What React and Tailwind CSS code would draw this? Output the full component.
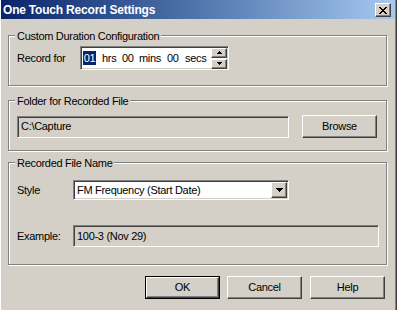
const sunken =
  "border border-t-[#808080] border-l-[#808080] border-b-white border-r-white shadow-[inset_1px_1px_0_#404040,inset_-1px_-1px_0_#d4d0c8]";
const raised =
  "border border-t-white border-l-white border-b-[#404040] border-r-[#404040] shadow-[inset_-1px_-1px_0_#808080]";

function Group({ label, className, children }) {
  return (
    <div
      className={`relative w-[379px] border border-[#808080] shadow-[inset_1px_1px_0_#fff,1px_1px_0_#fff] ${className}`}
    >
      <div className="absolute left-[6px] top-[-7px] px-[2px] bg-[#d4d0c8] leading-[14px]">
        {label}
      </div>
      {children}
    </div>
  );
}

function Button({ children, isDefault }) {
  if (isDefault) {
    return (
      <div className="w-[75px] h-[23px] border border-black">
        <button className={`w-full h-full ${raised} flex items-center justify-center`}>
          {children}
        </button>
      </div>
    );
  }
  return (
    <button className={`w-[75px] h-[23px] ${raised} flex items-center justify-center`}>
      {children}
    </button>
  );
}

// small arrows for spin and combo buttons
function Tri({ down, small }) {
  if (small) {
    return (
      <svg width="5" height="3" viewBox="0 0 5 3" shapeRendering="crispEdges">
        {down ? (
          <path d="M0 0h5v1h-1v1h-1v1h-1v-1h-1v-1h-1z" fill="#000" />
        ) : (
          <path d="M2 0h1v1h1v1h1v1h-5v-1h1v-1h1z" fill="#000" />
        )}
      </svg>
    );
  }
  return (
    <svg width="7" height="4" viewBox="0 0 7 4" shapeRendering="crispEdges">
      <path d="M0 0h7v1h-1v1h-1v1h-1v1h-1v-1h-1v-1h-1v-1h-1z" fill="#000" />
    </svg>
  );
}

export default function App() {
  return (
    <div className="w-[397px] h-[310px] bg-[#d4d0c8] border-l border-l-white border-r border-r-[#404040] shadow-[inset_-1px_0_0_#808080] font-['Liberation_Sans',Arial,sans-serif] text-[11px] tracking-[-0.3px] text-black select-none">
      {/* title bar */}
      <div className="h-[19px] mr-[1px] flex items-center justify-between bg-linear-to-r from-[#0a246a] to-[#a6caf0]">
        <span className="pl-[2px] text-white font-bold text-[12px] tracking-[-0.2px]">
          One Touch Record Settings
        </span>
        <button
          className={`mr-[4px] mt-[1px] w-[16px] h-[14px] bg-[#d4d0c8] ${raised} flex items-center justify-center`}
        >
          <svg width="8" height="7" viewBox="0 0 8 7" shapeRendering="crispEdges">
            <path
              d="M0 0h2v1h1v1h2v-1h1v-1h2v1h-1v1h-1v1h-1v1h1v1h1v1h1v1h-2v-1h-1v-1h-2v1h-1v1h-2v-1h1v-1h1v-1h1v-1h-1v-1h-1v-1h-1z"
              fill="#000"
            />
          </svg>
        </button>
      </div>

      <div className="pl-[7px] pt-[16px]">
        <Group label="Custom Duration Configuration" className="h-[51px]">
          <div className="flex items-center pl-[8px] pt-[10px]">
            <span className="w-[63px]">Record for</span>
            <div className={`w-[149px] h-[24px] bg-white ${sunken} flex items-center pl-[2px]`}>
              <span className="w-[13px] text-center bg-[#0a246a] text-white leading-[14px]">01</span>
              <span className="ml-[6px] w-[12px]">hrs</span>
              <span className="ml-[8px] w-[12px]">00</span>
              <span className="ml-[5px] w-[21px]">mins</span>
              <span className="ml-[7px] w-[12px]">00</span>
              <span className="ml-[6px] w-[22px]">secs</span>
              <div className="ml-auto mr-[1px] flex flex-col gap-[1px]">
                <div className={`w-[16px] h-[10px] bg-[#d4d0c8] ${raised} flex items-center justify-center`}>
                  <Tri small />
                </div>
                <div className={`w-[16px] h-[10px] bg-[#d4d0c8] ${raised} flex items-center justify-center`}>
                  <Tri small down />
                </div>
              </div>
            </div>
          </div>
        </Group>

        <Group label="Folder for Recorded File" className="mt-[14px] h-[51px]">
          <div className="flex items-center pl-[8px] pt-[14px]">
            <div className={`w-[272px] h-[22px] ${sunken} flex items-center pl-[3px]`}>
              C:\Capture
            </div>
            <div className="ml-[13px]">
              <Button>Browse</Button>
            </div>
          </div>
        </Group>

        <Group label="Recorded File Name" className="mt-[11px] h-[103px]">
          <div className="pl-[8px] pt-[17px]">
            <div className="flex items-center">
              <span className="w-[56px]">Style</span>
              <div className={`w-[216px] h-[20px] bg-white ${sunken} flex items-center pl-[3px]`}>
                FM Frequency (Start Date)
                <div
                  className={`ml-auto mr-[1px] w-[16px] h-[16px] bg-[#d4d0c8] ${raised} flex items-center justify-center`}
                >
                  <Tri down />
                </div>
              </div>
            </div>
            <div className="flex items-center mt-[25px]">
              <span className="w-[56px]">Example:</span>
              <div className={`w-[306px] h-[22px] ${sunken} flex items-center pl-[3px]`}>
                100-3 (Nov 29)
              </div>
            </div>
          </div>
        </Group>

        <div className="mt-[11px] flex pl-[137px] gap-[7px]">
          <Button isDefault>OK</Button>
          <Button>Cancel</Button>
          <div className="ml-[1px]">
            <Button>Help</Button>
          </div>
        </div>
      </div>
    </div>
  );
}
